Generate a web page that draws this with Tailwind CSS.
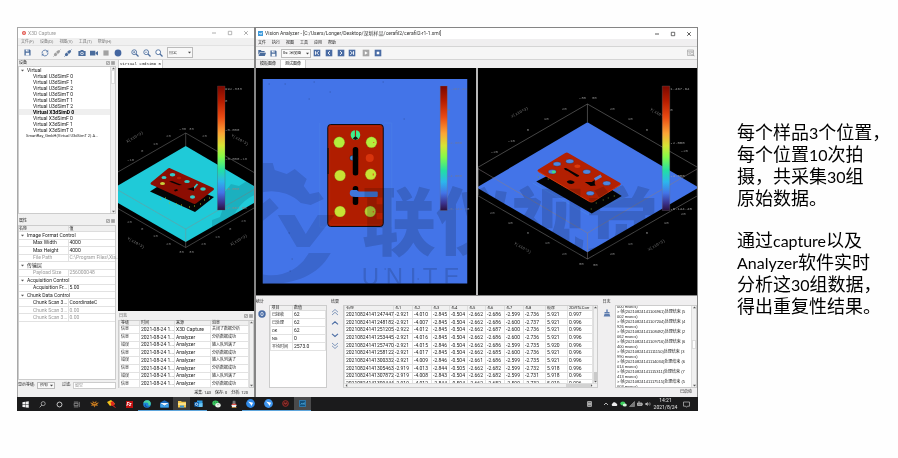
<!DOCTYPE html>
<html lang="zh-CN">
<head>
<meta charset="utf-8">
<title>X3D Capture / Vision Analyzer</title>
<script src="https://cdn.jsdelivr.net/npm/@tailwindcss/browser@4"></script>
</head>
<body class="bg-[#fefefe] min-h-screen font-['Roboto','Noto_Sans_CJK_SC',sans-serif] text-[5px] leading-none text-[#222]">

<svg class="absolute w-0 h-0" aria-hidden="true">
  <defs>
    <linearGradient id="jet" x1="0" y1="0" x2="0" y2="1">
      <stop offset="0" stop-color="#7a0800"/><stop offset=".12" stop-color="#b51c00"/><stop offset=".25" stop-color="#ea4a12"/>
      <stop offset=".38" stop-color="#fca436"/><stop offset=".48" stop-color="#d6e434"/><stop offset=".57" stop-color="#84fb48"/>
      <stop offset=".68" stop-color="#22dfa4"/><stop offset=".77" stop-color="#2cb6ec"/><stop offset=".86" stop-color="#4374e8"/><stop offset=".94" stop-color="#3b3390"/><stop offset="1" stop-color="#2a0f3c"/>
    </linearGradient>
    <g id="mark" fill="#d6d9da" class="mix-blend-multiply">
      <path fill="#dddfe2" fill-rule="evenodd" d="M255 163l18 0 2 7 12 4 8-5 12 10-3 7 6 8 9-2 5 7-13 6-10-2a42 42 0 1 0 8 50h22c-12 22-35 31-62 31l-14-2-3-7-11-6-8 3-11-12 3-9-5-11-8-3 0-17 8-3 4-12-4-7 11-14 8 2 11-7z"/>
      <path fill="#dddfe2" d="M278 215h17l11 19 12-19h17l-25 32h-13z"/>
      <path fill="#dddfe2" d="M222 220l30-8 18-14 9 10-16 13v26h-10v-22z"/>
      <text x="362" y="249" font-size="74" font-weight="900" font-family="Noto Sans CJK SC">联仪视觉</text>
      <text x="362" y="285" font-size="24" font-family="Liberation Sans">U N I T E D</text>
    </g>
    <symbol id="i-save" viewBox="0 0 8 8"><path d="M.5.5h6l1 1v6h-7z" fill="#4a6c9c"/><path d="M2 .5h3.5v2.3H2zM2 4.3h4v3.2H2z" fill="#f4f6f9"/><path d="M4.2.9h.8v1.4h-.8z" fill="#4a6c9c"/></symbol>
    <symbol id="i-open" viewBox="0 0 8 8"><path d="M.3 1h2.5l.8.9h3v1.3H1.8L.3 6z" fill="#4a6c9c"/><path d="M2 3.7h6L6.8 7H.5z" fill="#4a6c9c"/></symbol>
    <symbol id="i-sync" viewBox="0 0 8 8"><path d="M1 4.4A3 3 0 0 1 6.3 2.2M7 3.6A3 3 0 0 1 1.7 5.8" fill="none" stroke="#5b7cab" stroke-width=".9"/><path d="M7.2.8v2.4H4.9zM.8 7.2V4.8h2.3z" fill="#5b7cab"/></symbol>
    <symbol id="i-plug" viewBox="0 0 8 8"><path d="M4.3 1.7L6 .9l1.2 1.2-.8 1.6-1.5 1.2L3.1 3.1zM2.7 3.6l1.7 1.7-.8 1.5-1.6.4L.8 6l.5-1.5z" fill="currentColor"/><path d="M6.5 1.5l1-1M.4 7.6l1.2-1.2" stroke="currentColor" stroke-width=".8"/></symbol>
    <symbol id="i-cam" viewBox="0 0 8 8"><path d="M.4 2h1.8l.6-1h2.4l.6 1h1.8v5H.4z" fill="#4a6c9c"/><circle cx="4" cy="4.4" r="1.6" fill="#f2f4f8"/><circle cx="4" cy="4.4" r=".9" fill="#4a6c9c"/></symbol>
    <symbol id="i-video" viewBox="0 0 8 8"><path d="M0 1.7h5.3v4.8H0zM5.7 3.6L8 2v4.4L5.7 4.9z" fill="#4a6c9c"/></symbol>
    <symbol id="i-square" viewBox="0 0 8 8"><path d="M1.4 1.4h5.2v5.2H1.4z" fill="#a2a2a2"/></symbol>
    <symbol id="i-dot" viewBox="0 0 8 8"><circle cx="4" cy="4" r="3.4" fill="#4466a0"/></symbol>
    <symbol id="i-zin" viewBox="0 0 8 8"><circle cx="3.2" cy="3.2" r="2.4" fill="#fff" stroke="#4a6c9c" stroke-width=".9"/><path d="M5 5l2.5 2.5" stroke="#4a6c9c" stroke-width="1.2"/><path d="M2 3.2h2.4M3.2 2v2.4" stroke="#4a6c9c" stroke-width=".7"/></symbol>
    <symbol id="i-zout" viewBox="0 0 8 8"><circle cx="3.2" cy="3.2" r="2.4" fill="#fff" stroke="#4a6c9c" stroke-width=".9"/><path d="M5 5l2.5 2.5" stroke="#4a6c9c" stroke-width="1.2"/><path d="M2 3.2h2.4" stroke="#4a6c9c" stroke-width=".7"/></symbol>
    <symbol id="i-zfit" viewBox="0 0 8 8"><circle cx="3.2" cy="3.2" r="2.4" fill="#fff" stroke="#4a6c9c" stroke-width=".9"/><path d="M5 5l2.5 2.5" stroke="#4a6c9c" stroke-width="1.2"/></symbol>
    <symbol id="i-first" viewBox="0 0 8 8"><path d="M.7.7h6.6v6.6H.7z" fill="#4a6ca4"/><path d="M2.5 2.2v3.6M5.8 2.2L3.6 4l2.2 1.8" stroke="#fff" stroke-width=".9" fill="none"/></symbol>
    <symbol id="i-prev" viewBox="0 0 8 8"><path d="M.7.7h6.6v6.6H.7z" fill="#4a6ca4"/><path d="M5 2.1L3 4l2 1.9" stroke="#fff" stroke-width=".9" fill="none"/></symbol>
    <symbol id="i-next" viewBox="0 0 8 8"><path d="M.7.7h6.6v6.6H.7z" fill="#4a6ca4"/><path d="M3 2.1L5 4 3 5.9" stroke="#fff" stroke-width=".9" fill="none"/></symbol>
    <symbol id="i-last" viewBox="0 0 8 8"><path d="M.7.7h6.6v6.6H.7z" fill="#4a6ca4"/><path d="M5.5 2.2v3.6M2.2 2.2L4.4 4 2.2 5.8" stroke="#fff" stroke-width=".9" fill="none"/></symbol>
    <symbol id="i-play" viewBox="0 0 8 8"><path d="M.7.7h6.6v6.6H.7z" fill="#a6a6a6"/><path d="M2.8 2.2L5.8 4l-3 1.8z" fill="#fff"/></symbol>
    <symbol id="i-stop" viewBox="0 0 8 8"><path d="M.7.7h6.6v6.6H.7z" fill="#4a6ca4"/><path d="M2.7 2.7h2.6v2.6H2.7z" fill="#fff"/></symbol>
    <symbol id="i-min" viewBox="0 0 8 8"><path d="M2 4h4" stroke="currentColor" stroke-width=".8"/></symbol>
    <symbol id="i-max" viewBox="0 0 8 8"><path d="M2.3 2.3h3.4v3.4H2.3z" fill="none" stroke="currentColor" stroke-width=".7"/></symbol>
    <symbol id="i-x" viewBox="0 0 8 8"><path d="M2.2 2.2l3.6 3.6M5.8 2.2L2.2 5.8" stroke="currentColor" stroke-width=".8"/></symbol>
    <symbol id="i-dock" viewBox="0 0 9 4"><path d="M.5.5h3v3h-3zM5.5.5h3v3h-3z" fill="#ddd" stroke="#777" stroke-width=".5"/><path d="M6 1l2 2M8 1L6 3M1.3 2.7l1.4-1.4" stroke="#666" stroke-width=".5"/></symbol>
    <symbol id="i-up2" viewBox="0 0 8 8"><path d="M1 4.2L4 1.5l3 2.7M1 7l3-2.7L7 7" fill="none" stroke="#8299bd" stroke-width="1"/></symbol>
    <symbol id="i-up" viewBox="0 0 8 8"><path d="M1 5.4l3-2.6 3 2.6" fill="none" stroke="#4a6ca4" stroke-width="1.1"/></symbol>
    <symbol id="i-down" viewBox="0 0 8 8"><path d="M1 2.8l3 2.6 3-2.6" fill="none" stroke="#4a6ca4" stroke-width="1.1"/></symbol>
    <symbol id="i-down2" viewBox="0 0 8 8"><path d="M1 1l3 2.7L7 1M1 3.8l3 2.7 3-2.7" fill="none" stroke="#8299bd" stroke-width="1"/></symbol>
  </defs>
</svg>

<div class="flex items-start pt-[27px] pl-[17px]">
  <main class="flex-1 min-w-0">
    <div class="flex h-[370px]">

      <!-- X3D Capture -->
      <section class="w-[237px] shrink-0 flex flex-col bg-[#f0f0f0] border-t border-l border-[#a8a8a8]">
        <header class="h-[10px] bg-white flex items-center pl-[4px] text-[#999]">
          <svg class="w-[4px] h-[4px] mr-[2px]" viewBox="0 0 4 4"><circle cx="2" cy="2" r="2" fill="#e2544c"/><path d="M1 2h2M2 1v2" stroke="#fff" stroke-width=".5"/></svg>
          <h1 class="flex-1">X3D Capture</h1>
          <button aria-label="最小化" class="w-[16px]"><svg class="w-[8px] h-[8px]"><use href="#i-min"/></svg></button>
          <button aria-label="最大化" class="w-[16px]"><svg class="w-[8px] h-[8px]"><use href="#i-max"/></svg></button>
          <button aria-label="关闭" class="w-[12px]"><svg class="w-[8px] h-[8px]"><use href="#i-x"/></svg></button>
        </header>
        <nav class="h-[8px] flex items-center gap-[6px] pl-[3px] text-[4px] text-[#777] border-b border-[#e2e2e2]">
          <button>文件(F)</button><button>设备(D)</button><button>视图(V)</button><button>工具(T)</button><button>帮助(H)</button>
        </nav>
        <div class="h-[14px] flex items-center pl-[6px] border-b border-[#d5d5d5] bg-[#f4f4f4]">
          <button aria-label="保存" class="w-[17px]"><svg class="w-[7px] h-[7px]"><use href="#i-save"/></svg></button>
          <button aria-label="刷新" class="w-[12px]"><svg class="w-[8px] h-[8px]"><use href="#i-sync"/></svg></button>
          <button aria-label="断开" class="w-[11px] text-[#a0a0a0]"><svg class="w-[8px] h-[8px]"><use href="#i-plug"/></svg></button>
          <button aria-label="连接" class="w-[14px] text-[#4a6c9c]"><svg class="w-[8px] h-[8px]"><use href="#i-plug"/></svg></button>
          <button aria-label="拍照" class="w-[12px]"><svg class="w-[8px] h-[8px]"><use href="#i-cam"/></svg></button>
          <button aria-label="录像" class="w-[12px]"><svg class="w-[8px] h-[8px]"><use href="#i-video"/></svg></button>
          <button aria-label="停止" class="w-[12px]"><svg class="w-[8px] h-[8px]"><use href="#i-square"/></svg></button>
          <button aria-label="触发" class="w-[17px]"><svg class="w-[8px] h-[8px]"><use href="#i-dot"/></svg></button>
          <button aria-label="放大" class="w-[12px]"><svg class="w-[8px] h-[8px]"><use href="#i-zin"/></svg></button>
          <button aria-label="缩小" class="w-[12px]"><svg class="w-[8px] h-[8px]"><use href="#i-zout"/></svg></button>
          <button aria-label="适合窗口" class="w-[12px]"><svg class="w-[8px] h-[8px]"><use href="#i-zfit"/></svg></button>
          <div class="relative h-[11px] w-[26px]">
            <select aria-label="显示模式" class="appearance-none block w-full h-full border border-[#bbb] bg-[#f8f8f8] text-[4px] leading-none pl-[1px]"><option>点云</option></select>
            <svg class="absolute right-[2px] top-[4px] w-[3px] h-[3px] pointer-events-none" viewBox="0 0 3 3"><path d="M0 .8h3L1.5 2.4z" fill="#444"/></svg>
          </div>
        </div>

        <div class="flex-1 min-h-0 flex">
          <aside class="w-[98px] shrink-0 flex flex-col">
            <h2 class="h-[6px] flex items-center justify-between pl-[1px] pr-[1px] text-[4px]">设备<svg class="w-[9px] h-[4px]"><use href="#i-dock"/></svg></h2>
            <div class="h-[148px] flex bg-white border border-[#ccc]">
              <ul id="tree" class="flex-1 min-w-0"></ul>
              <div class="w-[5px] bg-[#f1f1f1] border-l border-[#ddd] flex flex-col justify-between items-center">
                <svg class="w-[3px] h-[3px]" viewBox="0 0 3 3"><path d="M0 2.2h3L1.5.6z" fill="#666"/></svg>
                <i class="block w-full h-[14px] bg-white border border-[#ddd] mb-auto"></i>
                <svg class="w-[3px] h-[3px]" viewBox="0 0 3 3"><path d="M0 .8h3L1.5 2.4z" fill="#666"/></svg>
              </div>
            </div>
            <h2 class="h-[11px] flex items-center justify-between px-[1px] pt-[2px] text-[4px]">属性<svg class="w-[9px] h-[4px]"><use href="#i-dock"/></svg></h2>
            <div class="flex-1 min-h-0 bg-white border border-[#ccc]">
              <table class="w-full h-[96px] table-fixed border-collapse">
                <colgroup><col class="w-[49px]"><col></colgroup>
                <tbody id="props"></tbody>
              </table>
            </div>
            <div class="h-[10px] flex items-center text-[4px] shrink-0">
              <label for="lvl" class="whitespace-nowrap">显示等级:</label>
              <div class="relative ml-[2px] h-[7px] w-[18px]">
                <select id="lvl" class="appearance-none block w-full h-full border border-[#bbb] bg-[#f8f8f8] pl-[2px] text-[4px] leading-none"><option>所有</option></select>
                <svg class="absolute right-[2px] top-[2px] w-[3px] h-[3px] pointer-events-none" viewBox="0 0 3 3"><path d="M0 .8h3L1.5 2.4z" fill="#444"/></svg>
              </div>
              <label for="flt" class="ml-[7px] whitespace-nowrap">过滤:</label>
              <input id="flt" placeholder="留空" class="ml-[2px] flex-1 min-w-0 h-[7px] bg-white border border-[#ccc] px-px text-[4px] leading-none placeholder:text-[#999]">
            </div>
            <div class="h-[7px]"></div>
          </aside>

          <div class="flex-1 min-w-0 flex flex-col pl-[2px]">
            <div class="h-[8px] flex"><button class="w-[45px] bg-white border-x border-[#ccc] font-['Liberation_Mono'] text-[4px] whitespace-nowrap">Virtual X3dSimD 0</button></div>
            <svg class="w-full h-[243px] shrink-0 bg-black isolate" viewBox="118 68 136 243" preserveAspectRatio="xMidYMid slice">
              <path d="M185.7 146L254 186v17l-68.300 39L117 202.500V186z" fill="#1fcad8"/>
              <path d="M150 191.500l45 20.500 19-15-20-8-34-4z" fill="#050505"/>
              <path d="M160 199h1m4-1h1m3 5h1m6 1h1m4 1h1m7 2h1m4-1h1m5-2h1m3-4h1m4-2h1" stroke="#a3c020" stroke-width="1.200"/>
              <path d="M169.500 168l44 20q1 1 0 2L196 203.500q-1.500.8-3 0l-42-19q-1-1 0-2l17-14q.8-.8 1.500-.5z" fill="#8c0d02"/>
              <g fill="#35c8c4"><ellipse cx="164" cy="177.500" rx="2.500" ry="1.500"/><ellipse cx="172.500" cy="174.800" rx="2.800" ry="1.700"/><ellipse cx="187" cy="181.500" rx="2.800" ry="1.600"/><ellipse cx="203" cy="189" rx="2.800" ry="1.800"/><ellipse cx="192.500" cy="197" rx="2.600" ry="1.700"/></g>
              <ellipse cx="162.500" cy="183.500" rx="2.500" ry="1.600" fill="#c8cf3a"/><ellipse cx="179" cy="178" rx="2.200" ry="1.200" fill="#b31d06"/>
              <path d="M194 188l3.500-4" stroke="#35c8c4" stroke-width="1.800"/>
              <path d="M169 181.500l3-.5 10 4-3 .3zM187 189l7-2v4zM174 190l3-1 1 1.500-3 1z" fill="#080404"/>
              <g fill="none" stroke="#8a8a8a" stroke-width=".45"><path d="M117 172.500L185.700 133 254 172.500M185.700 133v13M117 189.500l68.700 39.500L254 189.500M185.700 229v18.500M117 208l68.700 39.500L254 208"/></g>
              <g fill="#777" font-size="4" font-family="Liberation Mono"><text x="179" y="130">-30</text><text x="189" y="130">30</text><text x="166" y="137">20</text><text x="202" y="137">20</text><text x="153" y="145">10</text><text x="141" y="152">0</text><text x="127" y="161">-10</text><text x="240" y="160">-10</text><text x="127" y="223">20</text><text x="141" y="230">0</text><text x="153" y="237">10</text><text x="166" y="245">20</text><text x="179" y="253">30</text><text x="189" y="253">30</text><text x="201" y="245">20</text><text x="215" y="238">10</text><text x="229" y="230">0</text><text x="241" y="222">20</text></g>
              <g fill="#777" font-size="4" font-family="Liberation Mono"><text transform="translate(127 143) rotate(-30)">X(x10^3)</text><text transform="translate(231 136) rotate(30)">Y(x10^3)</text><text transform="translate(127 239) rotate(30)">Y(x10^3)</text><text transform="translate(231 246) rotate(-30)">X(x10^3)</text></g>
              <use href="#mark"/>
              <path d="M217.500 86h7.500v124h-7.500z" fill="url(#jet)" stroke="#555" stroke-width=".3"/>
              <g fill="#8a8a8a" font-size="4" font-family="Liberation Mono"><text x="225" y="90">992.333</text><text x="225" y="102">0</text><text x="225" y="131">-0.000</text><text x="225" y="160">-0.000</text><text x="225" y="190">-0.000</text><text x="225" y="209">-7.667.00</text></g>
            </svg>
            <h2 class="h-[9px] flex items-center justify-between px-[1px] text-[4px] text-[#555]">日志<svg class="w-[9px] h-[4px]"><use href="#i-dock"/></svg></h2>
            <div class="h-[68px] shrink-0 flex bg-white border border-[#ccc]">
              <table class="flex-1 h-[67px] table-fixed border-collapse text-left w-[130px]">
                <colgroup><col class="w-[20px]"><col class="w-[35px]"><col class="w-[36px]"><col></colgroup>
                <thead class="bg-[#f0f0f0] text-[4px]"><tr><th class="p-0 pl-px font-normal border border-t-0 border-[#ddd]">等级</th><th class="p-0 pl-px font-normal border border-t-0 border-[#ddd]">时间</th><th class="p-0 pl-px font-normal border border-t-0 border-[#ddd]">来源</th><th class="p-0 pl-px font-normal border border-t-0 border-[#ddd]">消息</th></tr></thead>
                <tbody id="log"></tbody>
              </table>
              <div class="w-[4px] bg-[#f1f1f1] border-l border-[#ddd] flex flex-col justify-between items-center">
                <svg class="w-[3px] h-[3px]" viewBox="0 0 3 3"><path d="M0 2.200h3L1.500.6z" fill="#666"/></svg>
                <svg class="w-[3px] h-[3px]" viewBox="0 0 3 3"><path d="M0 .8h3L1.500 2.400z" fill="#666"/></svg>
              </div>
            </div>
            <p class="flex-1 flex items-center justify-end gap-[4px] pr-[6px] text-[4px] whitespace-nowrap"><span>采集: 143</span><span>保存: 0</span><span>分析: 120</span></p>
          </div>
        </div>
      </section>

      <!-- Vision Analyzer -->
      <section class="flex-1 min-w-0 flex flex-col bg-[#f0eff0] border-t border-r border-l-2 border-[#858585]">
        <header class="h-[11px] bg-white flex items-center pl-[2px] text-[#333]">
          <svg class="w-[5px] h-[5px] mr-[2px]" viewBox="0 0 5 5"><path d="M0 0h5v5H0z" fill="#3f9bdc"/><path d="M1 3l1-1 1 1.500L4 1.500" stroke="#fff" stroke-width=".7" fill="none"/></svg>
          <h1 class="flex-1 whitespace-nowrap">Vision Analyzer - [C:/Users/Longer/Desktop/深圳样品/cerafil2/cerafil2-r1-1.xml]</h1>
          <button aria-label="最小化" class="w-[16px]"><svg class="w-[8px] h-[8px]"><use href="#i-min"/></svg></button>
          <button aria-label="最大化" class="w-[16px]"><svg class="w-[8px] h-[8px]"><use href="#i-max"/></svg></button>
          <button aria-label="关闭" class="w-[12px]"><svg class="w-[8px] h-[8px]"><use href="#i-x"/></svg></button>
        </header>
        <nav class="h-[7px] flex items-center gap-[6px] pl-[2px] text-[4px]">
          <button>文件</button><button>执行</button><button>视图</button><button>工具</button><button>应用</button><button>帮助</button>
        </nav>
        <div class="h-[14px] flex items-center pl-[2px] border-y border-[#d5d5d5] bg-[#f6f6f6]">
          <button aria-label="打开" class="w-[12px]"><svg class="w-[8px] h-[8px]"><use href="#i-open"/></svg></button>
          <button aria-label="保存" class="w-[11px]"><svg class="w-[7px] h-[7px]"><use href="#i-save"/></svg></button>
          <div class="relative h-[9px] w-[30px] mr-[2px]">
            <select aria-label="图像类型" class="appearance-none block w-full h-full border border-[#bbb] bg-[#fafafa] text-[4px] leading-none pl-[1px]"><option>0s: 深度图</option></select>
            <svg class="absolute right-[2px] top-[3px] w-[3px] h-[3px] pointer-events-none" viewBox="0 0 3 3"><path d="M0 .8h3L1.500 2.400z" fill="#444"/></svg>
          </div>
          <button aria-label="第一帧" class="w-[12px]"><svg class="w-[8px] h-[8px]"><use href="#i-first"/></svg></button>
          <button aria-label="上一帧" class="w-[12px]"><svg class="w-[8px] h-[8px]"><use href="#i-prev"/></svg></button>
          <button aria-label="下一帧" class="w-[11px]"><svg class="w-[8px] h-[8px]"><use href="#i-next"/></svg></button>
          <button aria-label="最后一帧" class="w-[14px]"><svg class="w-[8px] h-[8px]"><use href="#i-last"/></svg></button>
          <button aria-label="运行" class="w-[12px]"><svg class="w-[8px] h-[8px]"><use href="#i-play"/></svg></button>
          <button aria-label="停止" class="w-[12px]"><svg class="w-[8px] h-[8px]"><use href="#i-stop"/></svg></button>
          <button aria-label="查看结果" class="ml-auto mr-[2px]"><svg class="w-[8px] h-[8px]" viewBox="0 0 8 8"><path d="M.5 1h6v5.500h-6zM.5 2.300h6M1.500 3.700h2M1.500 5h2" fill="none" stroke="#999" stroke-width=".6"/><circle cx="5" cy="4.700" r="1.300" fill="#fff" stroke="#888" stroke-width=".5"/><path d="M6 5.700l1.600 1.600" stroke="#888" stroke-width=".7"/></svg></button>
        </div>
        <div class="h-[8px] flex text-[4px]">
          <button class="w-[25px] border-r border-[#ccc]">模板图像</button><button class="w-[25px] bg-white border-r border-[#ccc]">测试图像</button>
        </div>
        <div class="h-[228px] shrink-0 flex gap-[2px] bg-[#b9b9b9] border-b border-[#888]">
          <svg class="flex-1 min-w-0 h-full bg-black isolate" viewBox="256 68 220 227" preserveAspectRatio="xMidYMid slice">
            <clipPath id="plate"><path d="M263 79h204.500v204.500H263z"/></clipPath>
            <path d="M263 79h204.500v204.500H263z" fill="#4374e8"/>
            <path d="M320 123v104h8M384 123h8v104" fill="none" stroke="#4a80ea" stroke-width=".6"/>
            <path d="M269 84h.7M285 84h.7M314 82h.7M309 99h.7M383 82h.7M289 233h.7M290 271h.7M404 119h.7M292 259h.7M330 92h.7M385 269h.7M418 279h.7" stroke="#1d2e60" stroke-width=".7"/>
            <rect x="328" y="124.500" width="55.500" height="102" rx="3" fill="#b01d00" stroke="#0c0c14" stroke-width="1"/>
            <rect x="330" y="126.500" width="51.500" height="98" rx="2" fill="none" stroke="#bb2a08" stroke-width=".5"/>
            <path d="M328.300 148v26" stroke="#111" stroke-width="1.200"/>
            <g fill="#c8e234" stroke="#6e7a18" stroke-width=".3"><circle cx="339.500" cy="142.300" r="5.500" fill="#b4ee3c"/><circle cx="371.700" cy="142.300" r="5.500" fill="#b4ee3c"/><circle cx="340.300" cy="175.500" r="5.500"/><circle cx="371" cy="174.300" r="5.500"/><circle cx="340.300" cy="211.500" r="5.500"/><circle cx="370.500" cy="211.500" r="5.500" fill="#b8ce34"/></g>
            <circle cx="370" cy="158" r="4" fill="#d8340c"/>
            <circle cx="355.700" cy="135" r="4.800" fill="#3cf08c"/><path d="M355.700 130v6" stroke="#b01d00" stroke-width="1.200"/><path d="M353 138.500l2.700-2.500 2.700 2.500-2.700 1.500z" fill="#111"/>
            <rect x="353" y="147" width="5.500" height="28.500" rx="2.500" fill="#000"/><rect x="353" y="186" width="5.500" height="19" rx="2.500" fill="#000"/>
            <path d="M353 155.500q-3-.5-3 2.500t3 2.500zM358 156.500v3" fill="#3a8fe0" stroke="#111" stroke-width=".4"/>
            <path d="M352 190h5l2 1.500h18q1 0 1 1v3.500q0 1-1 1h-21q-6 0-6-3.500t2-3.500z" fill="#4076d8"/>
            <path d="M373 173.500h1v2h-1zM373.500 142h1v1h-1zM373 211h1v1.500h-1z" fill="#e4481c"/>
            <g clip-path="url(#plate)" class="mix-blend-multiply"><use href="#mark"/></g>
            <path d="M440.500 86h7v124.500h-7z" fill="url(#jet)" stroke="#777" stroke-width=".3"/>
            <g fill="#6b78a0" font-size="4" font-family="Liberation Mono"><text x="448" y="90">1.467.64</text><text x="448" y="111">0</text><text x="448" y="144">-2.000</text><text x="448" y="177">-4.000</text><text x="448" y="210">-6.144.40</text></g>
          </svg>
          <svg class="flex-1 min-w-0 h-full bg-black isolate" viewBox="477 68 220 227" preserveAspectRatio="xMidYMid slice">
            <path d="M586.700 122.300L698 187.500l-111.300 64.800L476 187.500z" fill="#4374e8"/>
            <path d="M532 183l55 31.500 36-17" fill="none" stroke="#4a8cea" stroke-width=".5"/>
            <path d="M535.500 181.500L591 213.500l30-17.500-35-22-28-4z" fill="#030303"/>
            <path d="M537 177h1m9 2h1m42 30h1m4-6h1m6-3h1m4-2h1m5-2h1m4-4h1m-2-6h1" stroke="#7a9c38" stroke-width="1"/>
            <path d="M567 152.700l52.500 30.300q1 1 0 2L592.500 201.700q-1.800.8-3.500 0l-51.500-30q-1.500-1.200 0-2.200l27-16.500q1.300-.8 2.500-.3z" fill="#b32002"/><path d="M537 171.200l52 30.500q1.800.8 3.500 0l27-17" fill="none" stroke="#d83c0c" stroke-width=".9"/>
            <g fill="#4f86e0" stroke="#301010" stroke-width=".3"><ellipse cx="556.300" cy="164" rx="4" ry="2.200"/><ellipse cx="569" cy="161.300" rx="4" ry="2.200"/><ellipse cx="586" cy="171.800" rx="4" ry="2.300"/><ellipse cx="606" cy="183.300" rx="4" ry="2.300"/><ellipse cx="589.500" cy="193.300" rx="4" ry="2.300"/><ellipse cx="551.500" cy="171.800" rx="4" ry="2.200"/></g>
            <ellipse cx="553" cy="172" rx="2" ry="1.400" fill="#44dd80"/><ellipse cx="576.600" cy="166.300" rx="3" ry="1.700" fill="#dc3a0c"/>
            <path d="M563 168.500q2-1 4 .5l11.500 6.500q-1 2-3 1l-8.500-5.500q-3-1-4-2.500zM584 182h7l3-2v4l1 1.500-5 .5zM566 181.500q4-2.500 8 .5-2 3.500-7 1z" fill="#070303"/>
            <path d="M594 179.500l6.500-3.800" stroke="#4f86e0" stroke-width="3"/>
            <path d="M476 168l110.700 65L698 168M586.700 233v26" fill="none" stroke="#8a7f82" stroke-width=".5"/>
            <path d="M476 168L586.700 104 698 168M586.700 104v18M476 195l110.700 64L698 195M477.500 168v27M696.500 168v27" fill="none" stroke="#8a8a8a" stroke-width=".5"/>
            <g fill="#8a8a8a" font-size="4" font-family="Liberation Mono"><text x="578" y="99">-30</text><text x="591" y="99">30</text><text x="561" y="110">20</text><text x="609" y="110">20</text><text x="543" y="120">10</text><text x="627" y="120">10</text><text x="526" y="131">0</text><text x="645" y="131">0</text><text x="507" y="142">-10</text><text x="490" y="153">-20</text><text x="680" y="152">-20</text><text x="489" y="214">20</text><text x="507" y="224">10</text><text x="526" y="234">0</text><text x="544" y="244">10</text><text x="561" y="255">20</text><text x="578" y="265">30</text><text x="592" y="266">30</text><text x="609" y="255">20</text><text x="627" y="245">10</text><text x="645" y="234">0</text><text x="663" y="224">10</text><text x="680" y="215">20</text></g>
            <g fill="#777" font-size="4" font-family="Liberation Mono"><text transform="translate(511 118) rotate(-28)">X(x10^3)</text><text transform="translate(649 110) rotate(30)">Y(x10^3)</text><text transform="translate(513 244) rotate(30)">Y(x10^3)</text><text transform="translate(648 251) rotate(-30)">X(x10^3)</text></g>
            <use href="#mark"/>
            <path d="M661.500 86h7.500v124.500h-7.500z" fill="url(#jet)" stroke="#777" stroke-width=".3"/>
            <g fill="#9a9a9a" font-size="4" font-family="Liberation Mono"><text x="669.500" y="90">1.467.64</text><text x="669.500" y="111">0</text><text x="669.500" y="144">-2.000</text><text x="669.500" y="177">-4.000</text><text x="669.500" y="210">-6.144.40</text></g>
          </svg>
        </div>

        <div class="flex-1 min-h-0 flex pt-[4px]">
          <div class="w-[13px] flex flex-col gap-[6px]">
            <h2 class="text-[4px] leading-[4px] whitespace-nowrap">统计</h2>
            <button aria-label="重置统计" class="pl-[2px]"><svg class="w-[8px] h-[8px]" viewBox="0 0 8 8"><circle cx="4" cy="4" r="3.700" fill="#4a6ca4"/><ellipse cx="4" cy="4" rx="1.200" ry="1.800" fill="none" stroke="#fff" stroke-width=".7"/></svg></button>
          </div>
          <div class="w-[58px] h-[83px] mt-[5px] bg-white border border-[#ccc]">
            <table class="w-full h-[45px] table-fixed border-collapse text-left">
              <colgroup><col class="w-[22px]"><col></colgroup>
              <thead class="bg-[#f0f0f0] text-[4px]"><tr><th class="p-0 pl-px font-normal border border-t-0 border-l-0 border-[#ddd]">项目</th><th class="p-0 pl-px font-normal border border-t-0 border-r-0 border-[#ddd]">数值</th></tr></thead>
              <tbody id="stat"></tbody>
            </table>
          </div>
          <div class="w-[16px] flex flex-col items-center gap-[4px]">
            <h2 class="text-[4px] leading-[4px] whitespace-nowrap">结果</h2>
            <button aria-label="首行" class="leading-none h-[7px]"><svg class="w-[8px] h-[8px]"><use href="#i-up2"/></svg></button>
            <button aria-label="上一行" class="leading-none h-[8px]"><svg class="w-[8px] h-[8px]"><use href="#i-up"/></svg></button>
            <button aria-label="下一行" class="leading-none h-[7px]"><svg class="w-[8px] h-[8px]"><use href="#i-down"/></svg></button>
            <button aria-label="末行" class="leading-none h-[8px]"><svg class="w-[8px] h-[8px]"><use href="#i-down2"/></svg></button>
          </div>
          <div class="flex-1 min-w-0 h-[83px] mt-[5px] bg-white border border-[#ccc] flex flex-col">
            <div class="flex-1 min-h-0 flex overflow-hidden">
              <div class="flex-1 min-w-0 overflow-hidden">
                <table class="w-full h-[82px] table-fixed border-collapse text-left">
                  <colgroup><col class="w-[49px]"><col class="w-[19px]"><col class="w-[19px]"><col class="w-[18px]"><col class="w-[18px]"><col class="w-[18px]"><col class="w-[19px]"><col class="w-[19px]"><col class="w-[22px]"><col class="w-[22px]"><col></colgroup>
                  <thead class="bg-[#f0f0f0] text-[4px]"><tr id="reshead"></tr></thead>
                  <tbody id="res"></tbody>
                </table>
              </div>
              <div class="w-[4px] bg-[#f1f1f1] border-l border-[#ddd] flex flex-col items-center">
                <svg class="w-[3px] h-[3px]" viewBox="0 0 3 3"><path d="M0 2.200h3L1.500.6z" fill="#555"/></svg>
                <i class="mt-auto block w-full h-[8px] bg-[#c9c9c9]"></i>
                <svg class="w-[3px] h-[3px]" viewBox="0 0 3 3"><path d="M0 .8h3L1.500 2.400z" fill="#555"/></svg>
              </div>
            </div>
            <div class="h-[4px] shrink-0 bg-[#f1f1f1] border-t border-[#ddd] flex items-center px-px">
              <svg class="w-[3px] h-[3px]" viewBox="0 0 3 3"><path d="M2.200 0v3L.6 1.500z" fill="#555"/></svg>
              <i class="ml-auto block w-[24px] h-full bg-[#d2d2d2]"></i>
              <svg class="w-[3px] h-[3px] mr-[3px]" viewBox="0 0 3 3"><path d="M.8 0v3l1.600-1.500z" fill="#555"/></svg>
            </div>
          </div>
          <div class="w-[17px] flex flex-col items-center gap-[5px]">
            <h2 class="text-[4px] leading-[4px] whitespace-nowrap">日志</h2>
            <button aria-label="清空日志"><svg class="w-[8px] h-[8px]" viewBox="0 0 8 8"><path d="M3.300.5h1.400v2.500h1.800v1.500h-5V3h1.800zM1.500 5h5l.8 2.500H.7z" fill="#5d7cae"/></svg></button>
          </div>
          <div class="w-[82px] flex flex-col pt-[5px]">
            <div class="h-[83px] bg-white border border-[#ccc] flex overflow-hidden">
              <pre id="msgs" class="flex-1 min-w-0 -mt-[2px] font-['Liberation_Sans','Noto_Sans_CJK_SC',sans-serif] text-[4px] leading-[5px] pl-px"></pre>
              <div class="w-[5px] bg-[#f1f1f1] border-l border-[#ddd] flex flex-col items-center">
                <svg class="w-[3px] h-[3px]" viewBox="0 0 3 3"><path d="M0 2.200h3L1.500.6z" fill="#555"/></svg>
                <i class="mt-[31px] block w-full h-[9px] bg-white border border-[#ddd]"></i>
                <svg class="w-[3px] h-[3px] mt-auto" viewBox="0 0 3 3"><path d="M0 .8h3L1.500 2.400z" fill="#555"/></svg>
              </div>
            </div>
            <p class="text-[4px] leading-[8px] text-right pr-[5px]">已启动</p>
          </div>
        </div>
      </section>
    </div>

    <!-- Taskbar -->
    <footer class="h-[14px] bg-[#1b1b1c] flex items-stretch text-[#e6e6e6]">
      <div class="flex flex-1" id="tasks">
        <button aria-label="开始" class="w-[17px] flex items-center justify-center"><svg class="w-[7px] h-[7px]" viewBox="0 0 8 8"><path d="M.5 1.300L3.700.9v2.900H.5zM4.200.8L7.700.3v3.500H4.200zM.5 4.300h3.200v2.900l-3.200-.4zM4.200 4.300h3.500v3.500L4.200 7.300z" fill="#f2f2f2"/></svg></button>
        <button aria-label="搜索" class="w-[17px] flex items-center justify-center"><svg class="w-[7px] h-[7px]" viewBox="0 0 8 8"><circle cx="4.800" cy="3" r="2.300" fill="none" stroke="#ddd" stroke-width=".7"/><path d="M3.200 4.700L.8 7.300" stroke="#ddd" stroke-width=".8"/></svg></button>
        <button aria-label="Cortana" class="w-[17px] flex items-center justify-center"><svg class="w-[7px] h-[7px]" viewBox="0 0 8 8"><circle cx="4" cy="4" r="2.800" fill="none" stroke="#eee" stroke-width=".9"/></svg></button>
        <button aria-label="任务视图" class="w-[17px] flex items-center justify-center"><svg class="w-[7px] h-[7px]" viewBox="0 0 8 8"><path d="M1.300 2.700h4.400v2.600H1.300zM1 1.200h5M1 6.800h5M7.200 1v6" fill="none" stroke="#ccc" stroke-width=".6"/></svg></button>
        <button aria-label="应用" class="w-[18px] flex items-center justify-center"><svg class="w-[9px] h-[8px]" viewBox="0 0 9 8"><path d="M0 2.500l3 .5L2.500.8l2 1.600L6.500.8 6 3l3-.5-2 2L8 6 5.500 5.500 4.500 7.500l-1-2L1 6l1-1.500z" fill="#c07820"/><path d="M3 3.500h3" stroke="#502c08" stroke-width=".8"/></svg></button>
        <button aria-label="应用" class="w-[17px] flex items-center justify-center"><svg class="w-[9px] h-[8px]" viewBox="0 0 9 8"><path d="M0 2l4-2 4 3.500L3 6z" fill="#f2c21c"/><path d="M3.500 2.200L6 1l2 4-3.500 1z" fill="#e0281c"/><path d="M5 5l3.500 2.500" stroke="#e0281c" stroke-width="1"/></svg></button>
        <button aria-label="FileZilla" class="w-[18px] flex items-center justify-center"><span class="w-[7px] h-[7px] bg-[#c01010] text-white font-bold italic text-[5px] leading-[7px]">Fz</span></button>
        <button aria-label="Edge" class="w-[17px] flex items-center justify-center border-b border-[#5fa6dc]"><svg class="w-[8px] h-[8px]" viewBox="0 0 8 8"><circle cx="4" cy="4" r="3.800" fill="#1c86d8"/><path d="M.5 3.200A3.700 3.700 0 0 1 7.800 4q-.2 1.600-2.500 1.500Q6 3 4 2.700T.5 3.200z" fill="#48d49c"/><path d="M3 4.200q-.4 2.600 3.600 2.500Q3 8.600 1.500 5.500 1.800 4.300 3 4.200z" fill="#1450a4"/></svg></button>
        <button aria-label="邮件" class="w-[18px] flex items-center justify-center border-b border-[#5fa6dc]"><svg class="w-[9px] h-[8px]" viewBox="0 0 9 8"><path d="M.3 2.500L4.500.3l4.200 2.200v5H.3z" fill="#1c6cc0"/><path d="M.3 3h8.400L4.500 5.700z" fill="#f0f6fc"/><path d="M.3 3.500l4.200 2.600 4.200-2.600v4H.3z" fill="#3fa2ea"/></svg></button>
        <button aria-label="文件夹" class="w-[17px] flex items-center justify-center bg-[#3a3a3a] border-b border-[#5fa6dc]"><svg class="w-[8px] h-[8px]" viewBox="0 0 8 8"><path d="M0 1h3l.8.800H8v5.700H0z" fill="#f4c84a"/><path d="M0 3h8v2H0z" fill="#fbe08a"/><path d="M2 5.500h4v2H2z" fill="#3b96d8"/></svg></button>
        <button aria-label="Outlook" class="w-[17px] flex items-center justify-center border-b border-[#5fa6dc]"><svg class="w-[9px] h-[8px]" viewBox="0 0 9 8"><path d="M3 .5h5.500v6H3z" fill="#2f9ae0"/><path d="M3 4l5.500-1v4H3z" fill="#6cc4f2"/><path d="M.3 2h4.500v4.700H.3z" fill="#0c5fae"/><circle cx="2.500" cy="4.300" r="1.200" fill="none" stroke="#fff" stroke-width=".7"/></svg></button>
        <button aria-label="微信" class="w-[18px] flex items-center justify-center"><svg class="w-[9px] h-[8px]" viewBox="0 0 9 8"><ellipse cx="3.500" cy="3" rx="3.200" ry="2.600" fill="#35c45c"/><ellipse cx="6" cy="5.200" rx="2.700" ry="2.200" fill="#e8f4ea"/><path d="M2.300 2.300h.6M4.300 2.300h.6M5 4.700h.5M6.600 4.700h.5" stroke="#1b1b1c" stroke-width=".6"/></svg></button>
        <button aria-label="QQ" class="w-[17px] flex items-center justify-center"><svg class="w-[8px] h-[8px]" viewBox="0 0 8 8"><ellipse cx="4" cy="2.500" rx="2" ry="2.200" fill="#444"/><ellipse cx="4" cy="5.500" rx="2.500" ry="2" fill="#f2f2f2"/><path d="M1.800 3.800h4.400v1H1.800z" fill="#e0281c"/><path d="M3 2h.7M4.400 2h.7" stroke="#fff" stroke-width=".8"/><path d="M1.800 7h1.800v.8H1.800zM4.600 7h1.800v.8H4.600z" fill="#f0a020"/></svg></button>
        <button aria-label="应用" class="w-[17px] flex items-center justify-center border-b border-[#5fa6dc]"><svg class="w-[9px] h-[9px]" viewBox="0 0 8 8"><circle cx="4" cy="4" r="3.900" fill="#2f8ae8"/><path d="M1.800 2.200l4.500 1.200L4.800 6.300l-.6-1.500z" fill="#fff"/></svg></button>
        <button aria-label="应用" class="w-[18px] flex items-center justify-center border-b border-[#5fa6dc]"><svg class="w-[9px] h-[9px]" viewBox="0 0 8 8"><circle cx="4" cy="4" r="3.900" fill="#3f96ee"/><path d="M1.800 2.200l4.500 1.200L4.800 6.300l-.6-1.500z" fill="#fff"/></svg></button>
        <button aria-label="X3D Capture" class="w-[17px] flex items-center justify-center border-b border-[#5fa6dc]"><svg class="w-[7px] h-[7px]" viewBox="0 0 8 8"><circle cx="4" cy="4" r="3.300" fill="#3a1414" stroke="#b03430" stroke-width=".9"/><path d="M2 5l1-2 1 2 1-2 1 2" stroke="#d04840" stroke-width=".7" fill="none"/></svg></button>
        <button aria-label="Vision Analyzer" class="w-[17px] flex items-center justify-center bg-[#4a4a4b] border-b border-[#5fa6dc]"><svg class="w-[7px] h-[7px]" viewBox="0 0 8 8"><path d="M.5.5h7v7h-7z" fill="#12507c" stroke="#3198dc" stroke-width=".7"/><path d="M2 5.500l1.300-2L4.500 5 6 3v2.500" stroke="#5fc0f4" stroke-width=".7" fill="none"/></svg></button>
      </div>
      <div class="flex items-center gap-[2px] pr-[8px]">
        <svg class="w-[5px] h-[6px] mr-[9px]" viewBox="0 0 5 6"><path d="M.3.300h4.400v5.400H.3z" fill="#ddd"/><path d="M1 1.500h3M1 3h3M1 4.500h3" stroke="#333" stroke-width=".6"/></svg>
        <svg class="w-[6px] h-[6px]" viewBox="0 0 6 6"><path d="M1 4l2-2 2 2" fill="none" stroke="#ddd" stroke-width=".8"/></svg>
        <svg class="w-[7px] h-[6px]" viewBox="0 0 7 6"><path d="M1.500 5a1.400 1.400 0 0 1 0-2.500 2 2 0 0 1 3.500-.3A1.500 1.500 0 0 1 5.500 5z" fill="#eee"/></svg>
        <svg class="w-[7px] h-[6px]" viewBox="0 0 7 6"><ellipse cx="2.800" cy="2.500" rx="2.500" ry="2" fill="#3bd05c"/><ellipse cx="4.800" cy="4" rx="2" ry="1.600" fill="#d6f4dc"/></svg>
        <svg class="w-[6px] h-[6px]" viewBox="0 0 6 6"><path d="M.5 5.500l5-5v5z" fill="#777" stroke="#aaa" stroke-width=".5"/></svg>
        <svg class="w-[6px] h-[6px]" viewBox="0 0 6 6"><path d="M.5 2h4.500v2.500H.5zM5.500 2.700v1M1 1h2" stroke="#ccc" stroke-width=".7" fill="#888"/></svg>
        <svg class="w-[6px] h-[6px]" viewBox="0 0 6 6"><path d="M.3 2.200h1L2.700 1v4L1.300 3.800h-1z" fill="#ccc"/><path d="M3.600 2q.8 1 0 2M4.600 1.300q1.400 1.700 0 3.400" stroke="#ccc" stroke-width=".5" fill="none"/></svg>
        <p class="text-center text-[5px] leading-[7px] w-[25px]">14:21<br>2021/8/24</p>
        <svg class="w-[7px] h-[7px] ml-[3px]" viewBox="0 0 7 7"><path d="M.5 1h6v4.200H4.300L3.500 6.300l-.8-1.100H.5z" fill="none" stroke="#ddd" stroke-width=".6"/></svg>
      </div>
    </footer>
  </main>

  <article class="w-[161px] shrink-0 ml-[39px] pt-[94px] font-['Lato','Noto_Sans_CJK_SC',sans-serif] text-[18px] leading-[22px] text-black whitespace-nowrap">
    <p>每个样品<span class="text-[16px] leading-none">3</span>个位置，<br>每个位置<span class="text-[16px] leading-none">10</span>次拍<br>摄，共采集<span class="text-[16px] leading-none">30</span>组<br>原始数据。</p>
    <p class="mt-[20px]">通过<span class="text-[16px] leading-none">capture</span>以及<br><span class="text-[16px] leading-none">Analyzer</span>软件实时<br>分析这<span class="text-[16px] leading-none">30</span>组数据，<br>得出重复性结果。</p>
  </article>
</div>

<script>
const put = (id, html) => document.getElementById(id).innerHTML = html;
const cell = 'p-0 pl-px border border-[#e2e2e2] whitespace-nowrap';

const devices = ['U3dSimF 0','U3dSimF 1','U3dSimF 2','U3dSimT 0','U3dSimT 1','U3dSimT 2','X3dSimD 0','X3dSimF 0','X3dSimF 1','X3dSimT 0'];
put('tree',
  '<li class="h-[6px] flex items-center pl-[2px]"><svg class="w-[3px] h-[3px] mr-[3px]" viewBox="0 0 3 3"><path d="M0 .8h3L1.500 2.400z" fill="#555"/></svg>Virtual</li>' +
  devices.map(d => d === 'X3dSimD 0'
    ? `<li class="h-[6px] flex items-center pl-[14px] font-bold bg-[#efefef] text-black">Virtual ${d}</li>`
    : `<li class="h-[6px] flex items-center pl-[14px]">Virtual ${d}</li>`).join('') +
  '<li class="h-[6px] flex items-center pl-[7px] whitespace-nowrap text-[4px]">SmartRay_GmbH(Virtual U3dSimT 2) A...</li>');

const props = [['名称','值','h'],['Image Format Control','','g'],['Max Width','4000'],['Max Height','4000'],['File Path','C:\\Program Files\\Xia...','d'],
  ['传输层','','g'],['Payload Size','256000048','d'],['Acquisition Control','','g'],['Acquisition Fr...','5.00'],
  ['Chunk Data Control','','g'],['Chunk Scan 3...','CoordinateC'],['Chunk Scan 3...','0.00','d'],['Chunk Scan 3...','0.00','d']];
put('props', props.map(([n, v, k]) => {
  if (k === 'h') return `<tr class="bg-[#f0f0f0] text-[4px]"><th class="p-0 text-left font-normal border-b border-r border-[#ddd]">${n}</th><th class="p-0 pl-px text-left font-normal border-b border-[#ddd]">${v}</th></tr>`;
  if (k === 'g') return `<tr><td colspan="2" class="p-0 pl-[2px] border-b border-[#e2e2e2] whitespace-nowrap"><svg class="inline-block w-[3px] h-[3px] mr-[3px]" viewBox="0 0 3 3"><path d="M0 .8h3L1.500 2.400z" fill="#555"/></svg>${n}</td></tr>`;
  return `<tr class="${k === 'd' ? 'text-[#999]' : ''}"><td class="p-0 pl-[14px] border-b border-r border-[#e2e2e2] whitespace-nowrap">${n}</td><td class="p-0 pl-px border-b border-[#e2e2e2] whitespace-nowrap">${v}</td></tr>`;
}).join(''));

const log = [['信息','X3D Capture','关闭了数据分析'],['信息','Analyzer','分析数据成功'],['错误','Analyzer','输入队列满了'],['信息','Analyzer','分析数据成功'],
  ['错误','Analyzer','输入队列满了'],['信息','Analyzer','分析数据成功'],['错误','Analyzer','输入队列满了'],['信息','Analyzer','分析数据成功']];
put('log', log.map(([l, s, m]) => `<tr><td class="${cell} text-[4px]">${l}</td><td class="${cell}">2021-08-24 1...</td><td class="${cell}">${s}</td><td class="${cell} text-[4px]">${m}</td></tr>`).join(''));

put('stat', [['已接收','62'],['已处理','62'],['OK','62'],['NG','0'],['平均时间','2573.0']].map(([a, b]) =>
  `<tr><td class="${cell} text-[4px]">${a}</td><td class="${cell}">${b}</td></tr>`).join(''));

put('reshead', ['名称','孔1','孔2','孔3','孔4','孔5','孔6','孔7','孔8','板厚','2D对位Corr'].map(h =>
  `<th class="p-0 pl-px font-normal border border-t-0 border-[#ddd] whitespace-nowrap">${h}</th>`).join(''));
put('res', `247447 -2.921 -4.010 -2.845 -0.504 -2.662 -2.686 -2.599 -2.736 5.921 0.997
248182 -2.921 -4.007 -2.845 -0.504 -2.662 -2.686 -2.600 -2.737 5.921 0.996
251205 -2.922 -4.012 -2.845 -0.504 -2.662 -2.687 -2.600 -2.736 5.921 0.996
253445 -2.921 -4.016 -2.845 -0.504 -2.662 -2.686 -2.600 -2.736 5.921 0.996
257470 -2.921 -4.015 -2.846 -0.504 -2.662 -2.686 -2.599 -2.735 5.920 0.996
258122 -2.921 -4.017 -2.845 -0.504 -2.662 -2.685 -2.600 -2.736 5.921 0.996
300332 -2.921 -4.009 -2.846 -0.504 -2.661 -2.686 -2.599 -2.735 5.921 0.996
305463 -2.919 -4.013 -2.844 -0.505 -2.662 -2.682 -2.599 -2.732 5.918 0.996
307872 -2.919 -4.008 -2.843 -0.504 -2.662 -2.682 -2.599 -2.731 5.918 0.996
309444 -2.919 -4.012 -2.844 -0.504 -2.662 -2.682 -2.599 -2.732 5.919 0.996`.split('\n').map(r =>
  '<tr>' + r.split(' ').map((v, i) => `<td class="${cell}">${i ? v : '20210824141' + v}</td>`).join('') + '</tr>').join(''));

document.getElementById('msgs').textContent = '000 msecs)\n' + [['106961','5','002'],['107204','4','926'],['108492','2','062'],['109716','6','400'],
  ['111150','3','990'],['114034','6','014'],['115311','7','413'],['117515','5','003']].map(([i, a, b]) =>
  `> 帧(20210824141${i})处理结束 (${a}\n${b} msecs)`).join('\n');
</script>
</body>
</html>
